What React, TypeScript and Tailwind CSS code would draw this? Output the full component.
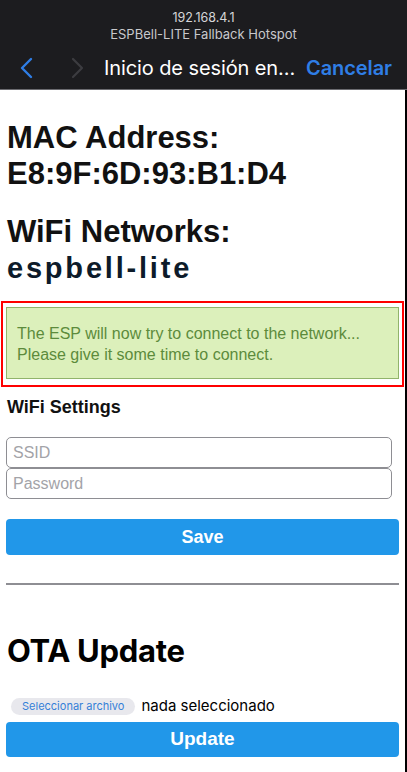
export default function App() {
  return (
    <div className="w-[407px] h-[772px] overflow-hidden bg-white font-['Liberation_Sans',Arial,sans-serif]">
      {/* iOS captive portal header */}
      <div className="h-[90px] bg-[#1c1c1f] border-b border-[#6b6b70] font-['Inter',sans-serif] flex flex-col">
        <div className="pt-[10px] text-center text-[12.5px] leading-[16px] text-[#d6d6d8]">192.168.4.1</div>
        <div className="text-center text-[13px] leading-[16px] text-[#c8c8cc]">ESPBell-LITE Fallback Hotspot</div>
        <div className="mt-[8px] flex items-center h-[36px]">
          <svg width="14" height="22" viewBox="0 0 14 22" className="ml-[19px]">
            <path d="M12 2 L3 11 L12 20" fill="none" stroke="#2f7ee6" strokeWidth="2.4" strokeLinecap="round" strokeLinejoin="round" />
          </svg>
          <svg width="14" height="22" viewBox="0 0 14 22" className="ml-[38px]">
            <path d="M2 2 L11 11 L2 20" fill="none" stroke="#3c3c40" strokeWidth="2.2" strokeLinecap="round" strokeLinejoin="round" />
          </svg>
          <span className="ml-[19px] text-[20px] text-white tracking-[-0.1px]">Inicio de sesión en...</span>
          <span className="ml-[11px] text-[20px] font-semibold text-[#2f7ee6] tracking-[-0.1px]">Cancelar</span>
        </div>
      </div>

      {/* page body */}
      <div className="h-[682px] w-[407px] border-r-2 border-black px-[6px]">
        <h1 className="pt-[30px] pl-[1px] text-[31px] leading-[36px] font-bold text-[#111]">
          MAC Address:
          <br />
          E8:9F:6D:93:B1:D4
        </h1>
        <h1 className="mt-[22px] pl-[1px] text-[31px] leading-[36px] font-bold text-[#111]">WiFi Networks:</h1>
        <div className="pl-[1px] text-[29px] leading-[36px] font-bold text-[#0d1b2a] tracking-[2.8px]">espbell-lite</div>

        {/* status message */}
        <div className="mt-[15px] -mx-[5px] border-2 border-[#ff0000] px-[3px] pt-[4px] pb-[6px]">
          <div className="bg-[#dcf0bb] border border-[#91b46b] pl-[10px] pt-[15px] pb-[13px] text-[16px] leading-[21px] text-[#5c8b3c]">
            The ESP will now try to connect to the network...
            <br />
            Please give it some time to connect.
          </div>
        </div>

        <h3 className="mt-[10px] pl-[1px] text-[18px] leading-[21px] font-bold text-[#111]">WiFi Settings</h3>
        <form className="mt-[19px]" onSubmit={(e) => e.preventDefault()}>
          <input
            type="text"
            placeholder="SSID"
            className="block w-[386px] h-[31px] border border-[#8e8e93] rounded-[5px] px-[6px] text-[16px] placeholder:text-[#a3a3a8] outline-none"
          />
          <input
            type="password"
            placeholder="Password"
            className="block w-[386px] h-[31px] border border-[#8e8e93] rounded-[5px] px-[6px] text-[16px] placeholder:text-[#a3a3a8] outline-none"
          />
          <button type="submit" className="mt-[20px] w-full h-[36px] bg-[#2197e9] rounded-[4px] text-white font-bold text-[18px]">
            Save
          </button>
        </form>

        <hr className="mt-[28px] border-t-2 border-[#8e8e93]" />

        <h1 className="mt-[49px] pl-[1px] text-[31px] leading-[34px] font-bold text-black font-['Inter',sans-serif] tracking-[-0.3px]">OTA Update</h1>

        <div className="mt-[29px] flex items-center h-[18px] pl-[5px]">
          <span className="h-[17px] px-[11px] rounded-full bg-[#e8e8ed] text-[11px] leading-[17px] text-[#3580d8] font-['Inter',sans-serif]">
            Seleccionar archivo
          </span>
          <span className="ml-[6px] text-[15px] text-black font-['Inter',sans-serif]">nada seleccionado</span>
        </div>
        <button type="button" className="mt-[7px] w-full h-[35px] bg-[#2197e9] rounded-[4px] text-white font-bold text-[19px]">
          Update
        </button>
      </div>
    </div>
  );
}
